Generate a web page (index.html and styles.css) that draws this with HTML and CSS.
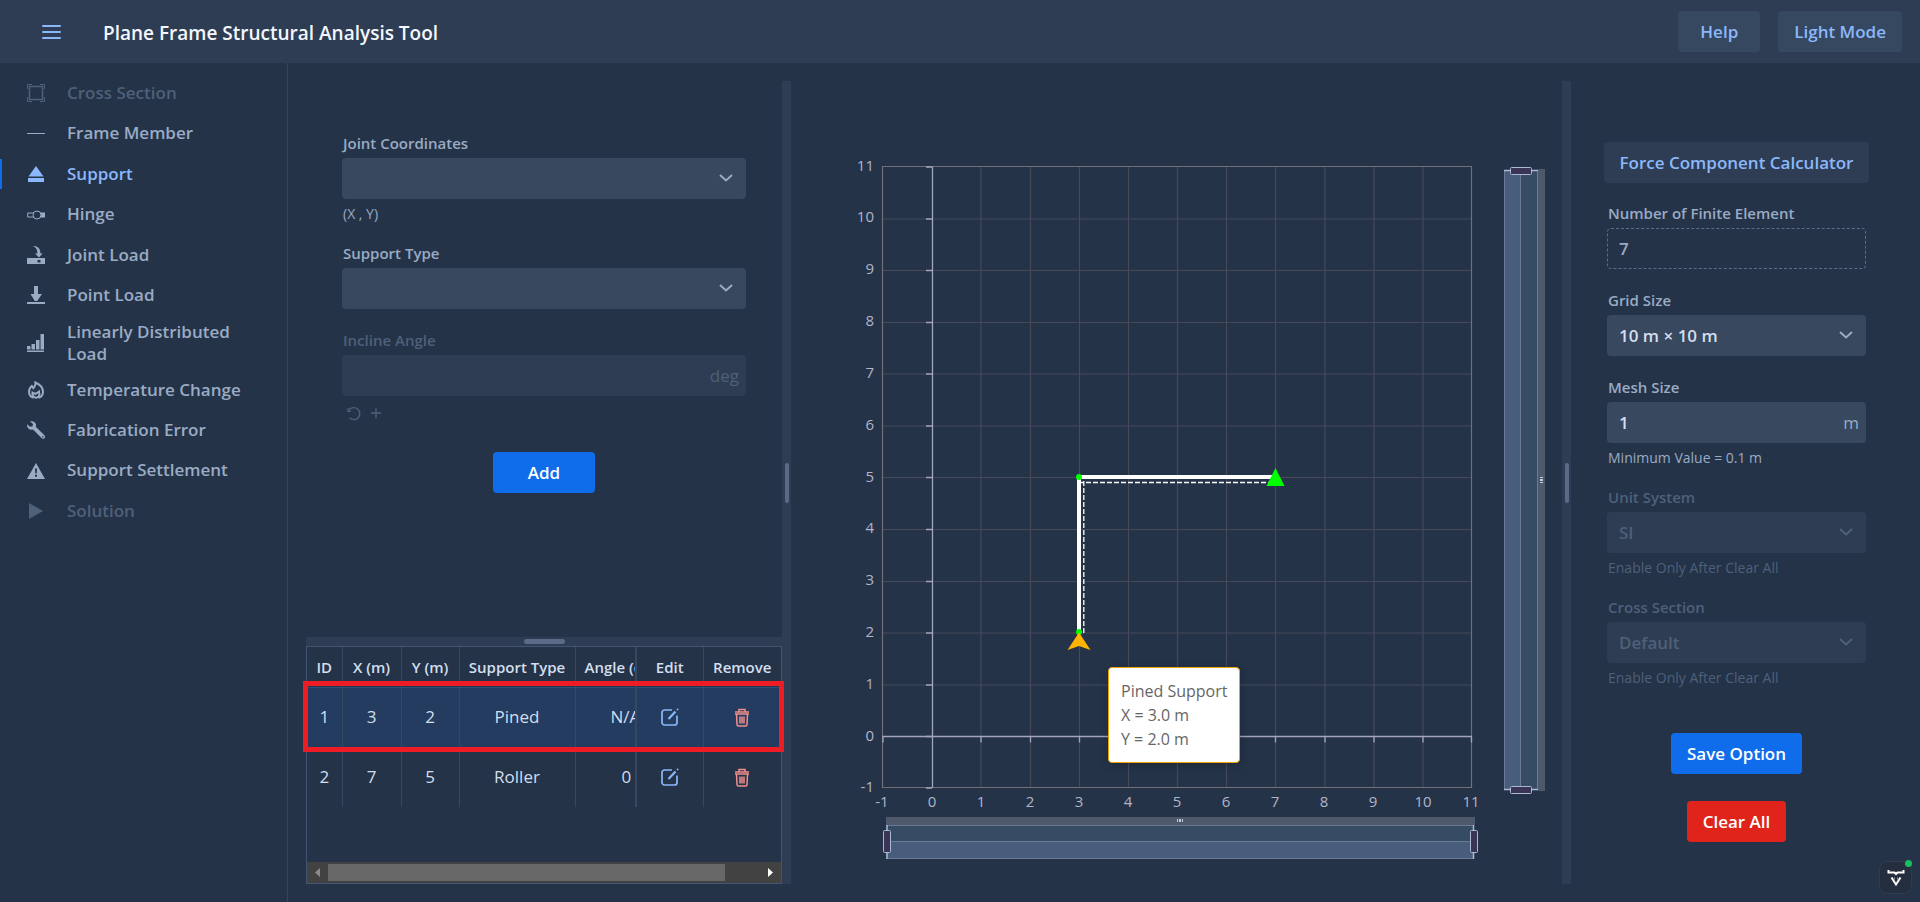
FILE: index.html
```html
<!DOCTYPE html>
<html lang="en">
<head>
<meta charset="utf-8">
<meta name="viewport" content="width=device-width, initial-scale=1">
<title>Plane Frame Structural Analysis Tool</title>
<link rel="stylesheet" href="styles.css">
</head>
<body>
<header class="topbar">
  <button class="menu-btn" type="button" aria-label="Toggle menu">
    <svg width="19" height="14" viewBox="0 0 19 14" fill="none" stroke="currentColor" stroke-width="2" stroke-linecap="round"><path d="M1 1h17M1 7h17M1 13h17"/></svg>
  </button>
  <h1 class="title">Plane Frame Structural Analysis Tool</h1>
  <button class="btn btn-top btn-help" type="button">Help</button>
  <button class="btn btn-top" type="button">Light Mode</button>
</header>

<div class="layout">
  <nav class="sidebar" aria-label="Steps">
    <a class="nav-item disabled" aria-disabled="true">
      <svg class="icon" viewBox="0 0 18 18" fill="none" stroke="currentColor"><path d="M.5 5V.5H5M13 .5h4.500V5M17.500 13v4.500H13M5 17.500H.5V13"/><path stroke-width="1.500" d="M2.500 2.500h13v13h-13z"/></svg>
      <span>Cross Section</span></a>
    <a class="nav-item" href="#member">
      <svg class="icon" viewBox="0 0 18 18" fill="currentColor"><path d="M0 8h18v1H0z"/></svg>
      <span>Frame Member</span></a>
    <a class="nav-item active" href="#support" aria-current="page">
      <svg class="icon" viewBox="0 0 18 18" fill="currentColor"><path d="M9 1l7.500 10.500h-15zM1 13h16v4H1z"/></svg>
      <span>Support</span></a>
    <a class="nav-item" href="#hinge">
      <svg class="icon" viewBox="0 0 18 18" fill="none" stroke="currentColor"><path d="M6 7H.7v4H6"/><circle cx="10" cy="9" r="4"/><path fill="currentColor" stroke="none" d="M13.500 6.500H18v5h-4.500l.9-2.500z"/></svg>
      <span>Hinge</span></a>
    <a class="nav-item" href="#joint-load">
      <svg class="icon" viewBox="0 0 18 18" fill="currentColor"><path fill-rule="evenodd" d="M0 12h18v6H0zM10.500 14v2.500h3V14z"/><path d="M6 0c5 0 7.800 3.200 7.300 7.500h2.400L12 11.500 8 7.500h2.300C10.500 4 9.500 1.500 6 0z"/></svg>
      <span>Joint Load</span></a>
    <a class="nav-item" href="#point-load">
      <svg class="icon" viewBox="0 0 18 18" fill="currentColor"><path d="M7 0h4v8h4l-4.500 6.500V15h-3v-.5L3.500 8H7zM0 16h18v2H0z"/></svg>
      <span>Point Load</span></a>
    <a class="nav-item tall" href="#distributed-load">
      <svg class="icon" viewBox="0 0 18 18" fill="currentColor"><path d="M0 12h3.500v3.500H0zM4.500 10H8v5.500H4.500zM9 6h3.500v9.500H9zM13.500 0H17v15.500h-3.500zM0 16.500h17V18H0z"/></svg>
      <span>Linearly Distributed Load</span></a>
    <a class="nav-item" href="#temperature">
      <svg class="icon" viewBox="0 0 18 18" fill="none" stroke="currentColor" stroke-width="2"><path d="M6.500 16.800C3.800 16 2 13.700 2 10.800 2 8.600 3 6.500 4.800 5l1.600 2.200C7.600 6 8.700 3.800 8.400 1.500c4.300 1.800 7.600 5.500 7.600 9.500 0 2.800-1.600 5-4.500 5.800"/><path d="M5.500 11.500v2.200c.3 1.800 1.600 3 3.500 3s3.200-1.200 3.500-3L12 10.500l-2 1.500-1.500.8z"/></svg>
      <span>Temperature Change</span></a>
    <a class="nav-item" href="#fabrication">
      <svg class="icon" viewBox="0 0 18 18" fill="currentColor"><path fill-rule="evenodd" d="M3 .5C5.500-.5 8.500.6 9 3.600c.1.900 0 1.500-.2 2.100l8.600 8.500c.9.900.9 2.200.1 3s-2.200.8-3-.1L6 8.500c-2.200.7-4.500-.2-5.500-2.300C0 5.200 0 4.200.2 3.300l2.800 2.400 2.600-.4.400-2.200zM15.800 15a.8.800 0 100 1.600.8.800 0 000-1.600z"/></svg>
      <span>Fabrication Error</span></a>
    <a class="nav-item" href="#settlement">
      <svg class="icon" viewBox="0 0 18 18" fill="currentColor"><path fill-rule="evenodd" d="M9 1l9 16H0zM8 6.500l.3 5h1.400l.3-5zM8 12.800v2h2v-2z"/></svg>
      <span>Support Settlement</span></a>
    <a class="nav-item disabled" aria-disabled="true">
      <svg class="icon" viewBox="0 0 18 18" fill="currentColor"><path d="M2 1l14 8-14 8z"/></svg>
      <span>Solution</span></a>
  </nav>

  <main class="workspace">
    <section class="left-pane">
      <form class="form-pane">
        <div class="field has-help">
          <label for="joint">Joint Coordinates</label>
          <div class="control"><select id="joint"><option></option></select>
            <svg class="chevron" viewBox="0 0 16 10"><path d="M2 2l6 5.500L14 2"/></svg></div>
          <div class="help">(X , Y)</div>
        </div>
        <div class="field">
          <label for="stype">Support Type</label>
          <div class="control"><select id="stype"><option></option></select>
            <svg class="chevron" viewBox="0 0 16 10"><path d="M2 2l6 5.500L14 2"/></svg></div>
        </div>
        <div class="field has-help off">
          <label for="angle">Incline Angle</label>
          <div class="control"><input id="angle" type="text" disabled><span class="unit">deg</span></div>
          <div class="help angle-tools">
            <button type="button" disabled aria-label="Reset angle"><svg width="16" height="16" viewBox="0 0 16 16" fill="none" stroke="currentColor" stroke-width="1.300"><path d="M3.500 12.800A6 6 0 1 0 3 5"/><path d="M2 3v3.400h3"/></svg></button>
            <button type="button" disabled aria-label="Add angle"><svg width="12" height="12" viewBox="0 0 12 12" fill="none" stroke="currentColor" stroke-width="1.300"><path d="M6 1v10M1 6h10"/></svg></button>
          </div>
        </div>
        <button class="btn btn-primary btn-add" type="button">Add</button>
      </form>
      <div class="split-h"><span></span></div>
      <div class="table-pane">
        <div class="table-scroll">
          <table>
            <colgroup><col class="c-id"><col class="c-x"><col class="c-y"><col class="c-type"><col class="c-angle"><col class="c-edit"><col class="c-remove"></colgroup>
            <thead><tr><th>ID</th><th>X (m)</th><th>Y (m)</th><th>Support Type</th><th class="angle"><div>Angle (deg)</div></th><th>Edit</th><th>Remove</th></tr></thead>
            <tbody>
              <tr class="selected"><td>1</td><td>3</td><td>2</td><td>Pined</td><td class="angle"><div class="na">N/A</div></td>
                <td><button class="ico edit" type="button" aria-label="Edit 1"><svg width="18" height="18" viewBox="0 0 18 18" fill="none" stroke="currentColor" stroke-width="1.700"><path d="M11 2H3.500A2.500 2.500 0 0 0 1 4.500v10A2.500 2.500 0 0 0 3.500 17h10a2.500 2.500 0 0 0 2.500-2.500V7.500"/><path stroke-width="2.200" d="M7.500 11l7-7.500"/><path d="M16 2l1.200-1.200"/></svg></button></td>
                <td><button class="ico remove" type="button" aria-label="Remove 1"><svg width="16" height="19" viewBox="0 0 16 19" fill="none" stroke="currentColor" stroke-width="1.500"><path d="M5 3.500V1.500h6v2M1 4h14M1 6h14M2.500 6l.5 10.500Q3 18 4.500 18h7q1.500 0 1.500-1.500L13.500 6M6 8.500v7M8 8.500v7M10 8.500v7"/></svg></button></td></tr>
              <tr><td>2</td><td>7</td><td>5</td><td>Roller</td><td class="angle"><div class="zero">0</div></td>
                <td><button class="ico edit" type="button" aria-label="Edit 2"><svg width="18" height="18" viewBox="0 0 18 18" fill="none" stroke="currentColor" stroke-width="1.700"><path d="M11 2H3.500A2.500 2.500 0 0 0 1 4.500v10A2.500 2.500 0 0 0 3.500 17h10a2.500 2.500 0 0 0 2.500-2.500V7.500"/><path stroke-width="2.200" d="M7.500 11l7-7.500"/><path d="M16 2l1.200-1.200"/></svg></button></td>
                <td><button class="ico remove" type="button" aria-label="Remove 2"><svg width="16" height="19" viewBox="0 0 16 19" fill="none" stroke="currentColor" stroke-width="1.500"><path d="M5 3.500V1.500h6v2M1 4h14M1 6h14M2.500 6l.5 10.500Q3 18 4.500 18h7q1.500 0 1.500-1.500L13.500 6M6 8.500v7M8 8.500v7M10 8.500v7"/></svg></button></td></tr>
            </tbody>
          </table>
        </div>
        <div class="hscroll" aria-hidden="true">
          <svg width="21" height="21" viewBox="0 0 21 21" fill="#8b8b8b"><path d="M13 6v9l-5-4.500z"/></svg>
          <div class="track"><div class="thumb"></div></div>
          <svg width="21" height="21" viewBox="0 0 21 21" fill="#ffffff"><path d="M8 6v9l5-4.500z"/></svg>
        </div>
        <div class="marker"></div>
      </div>
    </section>

    <div class="split-v"><span></span></div>

    <section class="chart-pane">
      <svg class="chart" viewBox="0 0 771 803" role="img" aria-label="Plane frame model">
        <g fill="none" stroke="#474959" stroke-width="1.200">
          <path d="M190 86V707M239.500 86V707M288.500 86V707M337.500 86V707M386.500 86V707M435.500 86V707M484.500 86V707M534 86V707M583 86V707M632 86V707"/>
          <path d="M92 138H681M92 189.500H681M92 241.500H681M92 293H681M92 345H681M92 396.500H681M92 448.500H681M92 500.500H681M92 552H681M92 604H681"/>
        </g>
        <path fill="none" stroke="#6f7078" stroke-width="1.200" d="M91.500 85.500H680.500V706.500H91.500z"/>
        <g fill="none" stroke="#a3a5bb" stroke-width="1.300">
          <path d="M141.500 85.500V707M91.500 655.500H681"/>
          <path d="M135 86h6M135 138h6M135 189.500h6M135 241.500h6M135 293h6M135 345h6M135 396.500h6M135 448.500h6M135 500.500h6M135 552h6M135 604h6M135 655.500h6M135 707h6"/>
          <path d="M92 655.500v6M190 655.500v6M239.500 655.500v6M288.500 655.500v6M337.500 655.500v6M386.500 655.500v6M435.500 655.500v6M484.500 655.500v6M534 655.500v6M583 655.500v6M632 655.500v6M680.500 655.500v6"/>
        </g>
        <g class="axis y">
          <text x="83" y="90">11</text><text x="83" y="141">10</text><text x="83" y="193">9</text><text x="83" y="245">8</text><text x="83" y="297">7</text><text x="83" y="349">6</text><text x="83" y="401">5</text><text x="83" y="452">4</text><text x="83" y="504">3</text><text x="83" y="556">2</text><text x="83" y="608">1</text><text x="83" y="660">0</text><text x="83" y="711">-1</text>
        </g>
        <g class="axis x">
          <text x="91" y="726">-1</text><text x="141" y="726">0</text><text x="190" y="726">1</text><text x="239" y="726">2</text><text x="288" y="726">3</text><text x="337" y="726">4</text><text x="386" y="726">5</text><text x="435" y="726">6</text><text x="484" y="726">7</text><text x="533" y="726">8</text><text x="582" y="726">9</text><text x="632" y="726">10</text><text x="680" y="726">11</text>
        </g>
        <g fill="none" stroke="#ffffff">
          <path stroke-width="4" d="M288 552V396H485"/>
          <path stroke-width="1.300" stroke-dasharray="5 2" d="M292.800 552V398M288 401.500H480"/>
        </g>
        <circle cx="288" cy="396" r="3" fill="#00ff00"/>
        <circle cx="288" cy="551" r="3" fill="#00ff00"/>
        <path fill="#00ff00" d="M484.500 387l9 18h-18z"/>
        <path fill="#ffb300" d="M288 551.500l11.500 17.500-11.500-4-11.500 4z"/>

        <g>
          <path fill="#4e5a6b" d="M95 736h589v8H95z"/>
          <path fill="#364b64" d="M95 744h588v16H95z"/>
          <path fill="#485d7c" d="M95 760h588v17H95z"/>
          <path fill="none" stroke="#6c7a97" d="M95 744.500h588M95 760.500h588M95 777.500h588"/>
          <path fill="none" stroke="#acb8d1" stroke-width="1.500" d="M96 744v34M682.500 744v34"/>
          <g fill="#3a3556" stroke="#acb8d1"><rect x="92.500" y="749.500" width="7" height="22" rx="1"/><rect x="679.500" y="749.500" width="7" height="22" rx="1"/></g>
          <path fill="#c3cad8" d="M386 738h1v3h-1zM388 738h2v3h-2zM391 738h1v3h-1z"/>
        </g>
        <g>
          <path fill="#4e5a6b" d="M747 88h7v622h-7z"/>
          <path fill="#364b64" d="M730 90h17v619h-17z"/>
          <path fill="#485d7c" d="M713 90h17v619h-17z"/>
          <path fill="none" stroke="#6c7a97" d="M713.500 90v619M729.500 90v619M746.500 90v619"/>
          <path fill="none" stroke="#acb8d1" stroke-width="1.500" d="M713 89.500h34M713 708.500h34"/>
          <g fill="#3a3556" stroke="#acb8d1"><rect x="719.500" y="86.500" width="21" height="7" rx="1"/><rect x="719.500" y="705.500" width="21" height="7" rx="1"/></g>
          <path fill="#c3cad8" d="M749 396h3v1h-3zM749 398h3v2h-3zM749 401h3v1h-3z"/>
        </g>
      </svg>
      <div class="tooltip">Pined Support<br>X = 3.0 m<br>Y = 2.0 m</div>
    </section>

    <div class="split-v"><span></span></div>

    <section class="right-pane">
      <button class="btn btn-tool" type="button">Force Component Calculator</button>
      <form class="options">
        <div class="field">
          <label for="nfe">Number of Finite Element</label>
          <div class="control"><input id="nfe" class="readonly" type="text" value="7" readonly></div>
        </div>
        <div class="field">
          <label for="grid">Grid Size</label>
          <div class="control"><select id="grid"><option>10 m × 10 m</option></select>
            <svg class="chevron" viewBox="0 0 16 10"><path d="M2 2l6 5.500L14 2"/></svg></div>
        </div>
        <div class="field has-help">
          <label for="mesh">Mesh Size</label>
          <div class="control"><input id="mesh" type="text" value="1"><span class="unit">m</span></div>
          <div class="help">Minimum Value = 0.1 m</div>
        </div>
        <div class="field has-help off">
          <label for="units">Unit System</label>
          <div class="control"><select id="units" disabled><option>SI</option></select>
            <svg class="chevron" viewBox="0 0 16 10"><path d="M2 2l6 5.500L14 2"/></svg></div>
          <div class="help">Enable Only After Clear All</div>
        </div>
        <div class="field has-help off">
          <label for="section">Cross Section</label>
          <div class="control"><select id="section" disabled><option>Default</option></select>
            <svg class="chevron" viewBox="0 0 16 10"><path d="M2 2l6 5.500L14 2"/></svg></div>
          <div class="help">Enable Only After Clear All</div>
        </div>
      </form>
      <button class="btn btn-primary btn-save" type="button">Save Option</button>
      <button class="btn btn-danger" type="button">Clear All</button>
    </section>
  </main>
</div>

<button class="badge" type="button" aria-label="Extension">
  <svg width="18" height="18" viewBox="0 0 18 18" fill="none" stroke="#ffffff" stroke-width="2"><path d="M1.500 1v2.500h6L9 5l1.500-1.500h6V1M4.500 8.500L9 15.500l4.500-7M7 9.500h.5M10.500 9.500h.5"/></svg>
  <span class="dot"></span>
</button>
</body>
</html>
```
FILE: styles.css
```css
:root {
  --bg: #243348;
  --raised: #2e3d53;
  --control: #37485f;
  --muted: #9aabc4;
  --off: #4f6079;
  --text: #d3deee;
  --link: #8bb8fa;
  --primary: #0f6ceb;
  --danger: #e0241b;
}
* { box-sizing: border-box; }
body {
  margin: 0;
  min-height: 100vh;
  display: flex;
  flex-direction: column;
  background: var(--bg);
  color: var(--text);
  font-family: "Open Sans", "Noto Sans", sans-serif;
  font-size: 17px;
  line-height: 22px;
}
button, input, select { font: inherit; color: inherit; margin: 0; }
button { border: 0; background: none; padding: 0; }

.topbar {
  display: flex;
  align-items: center;
  height: 63px;
  padding: 0 18px 0 42px;
  background: var(--raised);
}
.menu-btn { display: flex; color: var(--link); }
.title {
  flex: 1;
  margin: 0 0 0 42px;
  padding-top: 2px;
  color: #f3f7fd;
  font-size: 19px;
  font-weight: 600;
}
.btn {
  height: 41px;
  padding: 0 16px;
  border-radius: 4px;
  font-weight: 600;
  white-space: nowrap;
}
.btn-top { background: #364760; color: var(--link); }
.btn-help { padding: 0 22px; margin-right: 18px; }
.btn-primary { background: var(--primary); color: #fff; }
.btn-danger { background: var(--danger); color: #fff; margin-top: 27px; }
.btn-tool { background: var(--raised); color: var(--link); }

.layout { flex: 1; display: flex; }
.sidebar {
  flex: 0 0 288px;
  padding-top: 10px;
  border-right: 1px solid #33445a;
}
.nav-item {
  position: relative;
  display: flex;
  align-items: center;
  gap: 22px;
  padding: 9px 36px 9px 27px;
  color: var(--muted);
  font-weight: 600;
  line-height: 1.32;
  text-decoration: none;
}
.nav-item.tall { padding-top: 5px; padding-bottom: 4px; }
.nav-item.active { color: var(--link); }
.nav-item.active::before {
  content: "";
  position: absolute;
  left: 0;
  top: 5px;
  bottom: 5px;
  width: 2px;
  background: var(--primary);
}
.nav-item.disabled { color: var(--off); }
.icon { flex: none; width: 18px; height: 18px; }

.workspace { flex: 1; display: flex; min-width: 0; padding: 18px; }
.left-pane { flex: 0 0 476px; display: flex; flex-direction: column; min-width: 0; }
.form-pane {
  flex: 1;
  display: flex;
  flex-direction: column;
  padding: 48px 36px 0;
}
.field { display: flex; flex-direction: column; margin-bottom: 17px; }
.field.has-help { margin-bottom: 10px; }
.field label {
  padding-left: 1px;
  color: var(--muted);
  font-size: 15px;
  font-weight: 600;
  line-height: 29px;
}
.control { position: relative; display: flex; }
.control select, .control input {
  appearance: none;
  width: 100%;
  height: 41px;
  padding: 0 12px;
  border: 0;
  border-radius: 4px;
  background: var(--control);
  color: var(--text);
  font-weight: 600;
  opacity: 1;
}
.control input.readonly {
  background: none;
  border: 1px dashed #5b6c86;
  padding: 0 11px;
  color: var(--muted);
}
.chevron {
  position: absolute;
  right: 12px;
  top: 15px;
  width: 16px;
  height: 10px;
  fill: none;
  stroke: var(--muted);
  stroke-width: 2;
}
.unit {
  position: absolute;
  right: 7px;
  top: 0;
  line-height: 41px;
  color: var(--muted);
}
.help {
  padding-left: 1px;
  color: var(--muted);
  font-size: 14px;
  line-height: 30px;
}
.off label, .off .help, .off .unit { color: var(--off); }
.off .control select, .off .control input { background: var(--raised); color: var(--off); }
.off .chevron { stroke: var(--off); }
.angle-tools { display: flex; align-items: center; gap: 8px; height: 34px; padding-left: 4px; }
.angle-tools button { display: flex; color: var(--off); }
.btn-add { align-self: center; width: 102px; margin-top: 12px; }

.split-h {
  display: flex;
  align-items: center;
  justify-content: center;
  height: 9px;
  background: var(--raised);
}
.split-h span { width: 41px; height: 5px; border-radius: 3px; background: #5b6b87; }
.split-v {
  flex: 0 0 9px;
  display: flex;
  align-items: center;
  justify-content: center;
  background: var(--raised);
}
.split-v span { width: 4px; height: 40px; border-radius: 2px; background: #5b6b87; }

.table-pane {
  position: relative;
  display: flex;
  flex-direction: column;
  height: 238px;
  border: 1px solid #435572;
}
.table-scroll { flex: 1; overflow: hidden; }
table { width: 100%; table-layout: fixed; border-collapse: collapse; }
.c-id { width: 35px; }
.c-x { width: 59px; }
.c-y { width: 58px; }
.c-type { width: 116px; }
.c-angle { width: 61px; }
.c-edit { width: 67px; }
th, td { padding: 0; text-align: center; border-right: 1px solid #35485f; white-space: nowrap; }
th:last-child, td:last-child { border-right: 0; }
th { height: 40px; font-size: 15px; font-weight: 600; }
td { height: 60px; }
.selected td { background: #233c5f; border-top: 1px solid #2f5078; }
th.angle, td.angle { overflow: hidden; border-right: 2px solid #35485f; text-align: left; }
.angle div { overflow: hidden; padding-left: 9px; }
.angle .na { padding-left: 35px; }
.angle .zero { padding-left: 46px; }
.ico { display: flex; margin: 0 auto; }
.edit { color: var(--link); }
.remove { color: #f08f8b; }
.hscroll { display: flex; align-items: center; height: 21px; background: #424242; }
.track { flex: 1; }
.thumb { width: 92%; height: 17px; background: #686868; }
.marker {
  position: absolute;
  inset: 34px -3px auto -4px;
  height: 71px;
  border: 5px solid #ee1c24;
  pointer-events: none;
}

.chart-pane { position: relative; flex: 1; min-width: 0; }
.chart { display: block; width: 100%; }
.axis text { fill: #b3b4c9; font-size: 15px; }
.axis.y text { text-anchor: end; }
.axis.x text { text-anchor: middle; }
.tooltip {
  position: absolute;
  left: 317px;
  top: 586px;
  padding: 11px 12px;
  border: 1px solid #f5a300;
  border-radius: 4px;
  background: #fff;
  box-shadow: 1px 2px 10px rgba(0, 0, 0, 0.2);
  color: #666;
  font-size: 16px;
  line-height: 24px;
  white-space: nowrap;
}

.right-pane {
  flex: 0 0 331px;
  display: flex;
  flex-direction: column;
  align-items: center;
  padding-top: 61px;
}
.options { align-self: stretch; padding: 16px 36px 0; }
.btn-save { margin-top: 30px; }

.badge {
  position: fixed;
  right: 8px;
  bottom: 8px;
  display: flex;
  align-items: center;
  justify-content: center;
  width: 33px;
  height: 33px;
  border: 1px solid #303b4d;
  border-radius: 9px;
  background: #242e3f;
}
.dot {
  position: absolute;
  right: -1px;
  top: -2px;
  width: 7px;
  height: 7px;
  border-radius: 50%;
  background: #16c05c;
}
```
